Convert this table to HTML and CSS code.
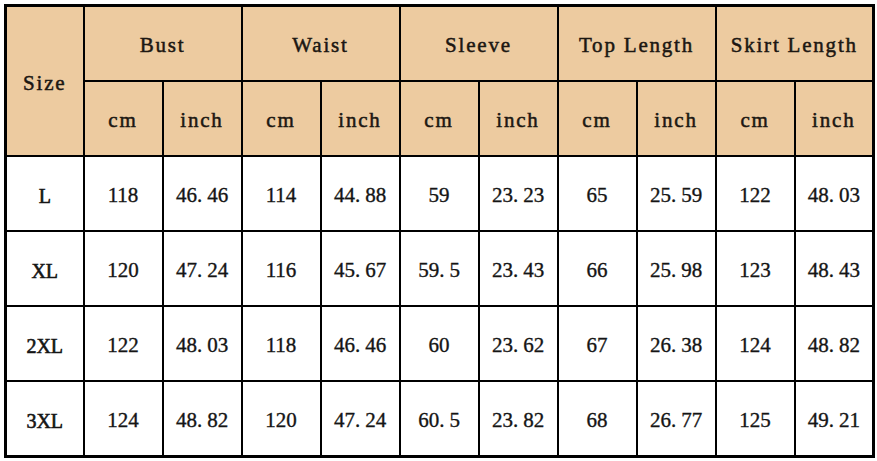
FILE: index.html
```html
<!DOCTYPE html>
<html>
<head>
<meta charset="utf-8">
<link rel="stylesheet" href="styles.css">
</head>
<body>
<table class="size-table">
  <colgroup>
    <col class="c-size">
    <col span="10" class="c-val">
  </colgroup>
  <thead>
    <tr>
      <th rowspan="2" class="hd">Size</th>
      <th colspan="2" class="hd">Bust</th>
      <th colspan="2" class="hd">Waist</th>
      <th colspan="2" class="hd">Sleeve</th>
      <th colspan="2" class="hd">Top Length</th>
      <th colspan="2" class="hd">Skirt Length</th>
    </tr>
    <tr>
      <th class="hd">cm</th><th class="hd">inch</th>
      <th class="hd">cm</th><th class="hd">inch</th>
      <th class="hd">cm</th><th class="hd">inch</th>
      <th class="hd">cm</th><th class="hd">inch</th>
      <th class="hd">cm</th><th class="hd">inch</th>
    </tr>
  </thead>
  <tbody>
    <tr>
      <td class="sz">L</td><td>118</td><td>46<span class="pt">.</span>46</td><td>114</td><td>44<span class="pt">.</span>88</td><td>59</td><td>23<span class="pt">.</span>23</td><td>65</td><td>25<span class="pt">.</span>59</td><td>122</td><td>48<span class="pt">.</span>03</td>
    </tr>
    <tr>
      <td class="sz">XL</td><td>120</td><td>47<span class="pt">.</span>24</td><td>116</td><td>45<span class="pt">.</span>67</td><td>59<span class="pt">.</span>5</td><td>23<span class="pt">.</span>43</td><td>66</td><td>25<span class="pt">.</span>98</td><td>123</td><td>48<span class="pt">.</span>43</td>
    </tr>
    <tr>
      <td class="sz">2XL</td><td>122</td><td>48<span class="pt">.</span>03</td><td>118</td><td>46<span class="pt">.</span>46</td><td>60</td><td>23<span class="pt">.</span>62</td><td>67</td><td>26<span class="pt">.</span>38</td><td>124</td><td>48<span class="pt">.</span>82</td>
    </tr>
    <tr>
      <td class="sz">3XL</td><td>124</td><td>48<span class="pt">.</span>82</td><td>120</td><td>47<span class="pt">.</span>24</td><td>60<span class="pt">.</span>5</td><td>23<span class="pt">.</span>82</td><td>68</td><td>26<span class="pt">.</span>77</td><td>125</td><td>49<span class="pt">.</span>21</td>
    </tr>
  </tbody>
</table>
</body>
</html>
```
FILE: styles.css
```css
html, body {
  margin: 0;
  padding: 0;
  background: #ffffff;
}
body {
  padding: 4px 0 0 4px;
}
.size-table {
  border-collapse: collapse;
  table-layout: fixed;
  width: 870px;
  border: 3px solid #000;
  font-family: "Liberation Serif", "Times New Roman", serif;
  font-weight: normal;
  font-size: 21px;
  color: #151515;
  -webkit-text-stroke: 0.35px #151515;
}
.c-size { width: 78px; }
.c-val { width: 79px; }
.size-table th,
.size-table td {
  border: 2px solid #000;
  text-align: center;
  vertical-align: middle;
  padding: 4px 0 0 0;
  height: 69px;
  line-height: 1;
}
.size-table .hd {
  background: #edcba0;
  font-weight: normal;
  font-size: 21px;
  letter-spacing: 1.8px;
  color: #1c1712;
  -webkit-text-stroke: 0.5px #1c1712;
}
.size-table .sz {
  font-size: 20px;
  font-weight: normal;
  -webkit-text-stroke: 0.6px #151515;
}
.pt {
  margin-right: 5px;
}
```
